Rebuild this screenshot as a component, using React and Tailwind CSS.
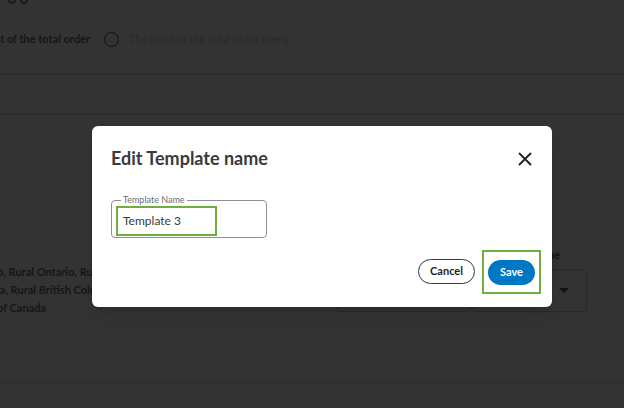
import React from "react";

const Background = () => {
  return (
    <div className="w-full h-full flex flex-col text-[#161616]">
      <div className="h-[6px] flex gap-[4px] pl-[8px] -mt-[4px]">
        <span className="w-[8px] h-[8px] rounded-full border-2 border-[#1c1c1c]" />
        <span className="w-[8px] h-[8px] rounded-full border-2 border-[#1c1c1c]" />
      </div>
      <div className="h-[69px] flex items-center -ml-[6px] text-[11px] pt-[6px]">
        <span className="font-bold">ht of the total order</span>
        <span className="ml-[14px] w-[15px] h-[15px] rounded-full border border-[#111]" />
        <span className="ml-[10px] text-[#2a2a2a]">The price of the total order (tiers)</span>
      </div>
      <div className="h-[40px] border-t border-[#2a2a2a] mt-[3px]" />
      <div className="flex-1 border-t border-[#2a2a2a] flex items-end pb-[70px]">
        <div className="flex w-full items-end">
          <div className="-ml-[3px] w-[303px] text-[11px] font-bold leading-[18px] -mb-[5px] whitespace-nowrap overflow-hidden">
            <div>o, Rural Ontario, Rural Quebec</div>
            <div>ia, Rural British Columbia</div>
            <div>of Canada</div>
          </div>
          <div className="ml-[36px] w-[134px] h-[30px] border border-[#2a2a2a] rounded-[3px]" />
          <div className="ml-[3px] flex flex-col">
            <span className="text-[11px] font-bold pl-[60px] mb-[6px]">Value</span>
            <div className="w-[114px] h-[43px] border border-[#2a2a2a] rounded-[3px] flex items-center justify-end pr-[17px]">
              <span className="w-0 h-0 border-l-[5px] border-r-[5px] border-t-[5px] border-l-transparent border-r-transparent border-t-[#111]" />
            </div>
          </div>
        </div>
      </div>
      <div className="h-[26px] border-t border-[#2c2c2c]" />
    </div>
  );
};

const Modal = () => {
  return (
    <div className="absolute left-[92px] top-[126px] w-[460px] h-[181px] bg-white rounded-[6px] shadow-lg flex flex-col px-[19px]">
      <div className="flex items-center justify-between h-[64px] pt-[1px]">
        <h2 className="text-[18px] font-bold text-[#393a3d]">Edit Template name</h2>
        <button className="w-[20px] h-[20px] flex items-center justify-center mr-[-2px]">
          <svg width="14" height="14" viewBox="0 0 14 14">
            <path d="M1.5 1.5 L12.5 12.5 M12.5 1.5 L1.5 12.5" stroke="#1f1f1f" strokeWidth="1.8" strokeLinecap="round" />
          </svg>
        </button>
      </div>
      <fieldset className="mt-[5px] w-[156px] h-[43px] border border-[#8d9096] rounded-[4px] px-[4px] pb-[2px]">
        <legend className="text-[9px] text-[#6b6c72] px-[2px] ml-[5px] leading-[10px]">Template Name</legend>
        <div className="w-[101px] h-[30px] border-2 border-[#6fae3c] flex items-center pl-[5px] text-[12px] text-[#393a3d] mt-[1px]">
          Template 3
        </div>
      </fieldset>
      <div className="flex-1 flex items-start justify-end gap-[7px] pt-[12px] mr-[-8px]">
        <button className="mt-[9px] w-[57px] h-[25px] rounded-full border border-[#393a3d] text-[11px] font-bold text-[#1f1f1f]">
          Cancel
        </button>
        <div className="w-[59px] h-[44px] border-2 border-[#6fae3c] flex items-center justify-center">
          <button className="w-[47px] h-[25px] rounded-full bg-[#0077c5] text-white text-[11px] font-bold">
            Save
          </button>
        </div>
      </div>
    </div>
  );
};

export default function App() {
  return (
    <div className="relative w-[624px] h-[408px] overflow-hidden bg-[#333333]" style={{ fontFamily: "Lato, 'Noto Sans', sans-serif" }}>
      <Background />
      <Modal />
    </div>
  );
}
